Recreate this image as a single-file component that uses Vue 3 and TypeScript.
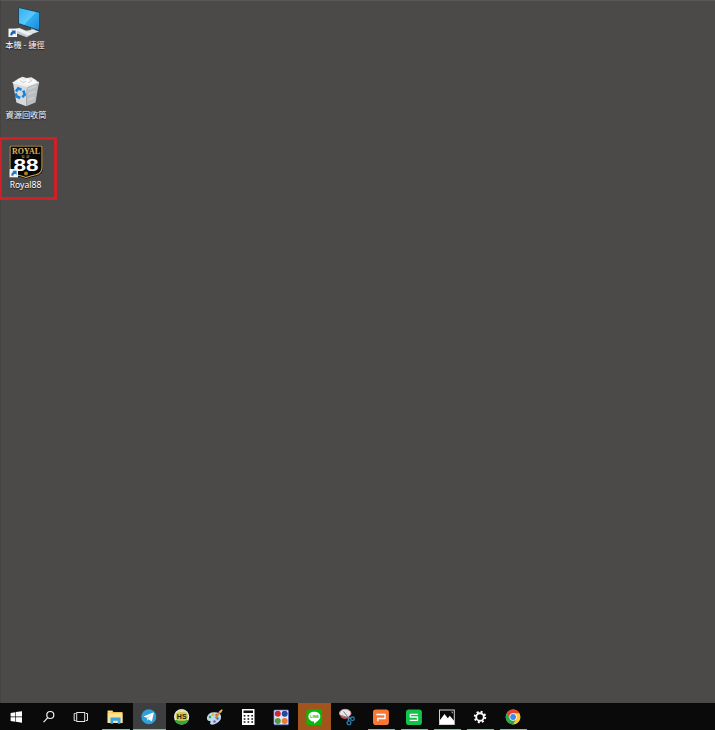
<script setup lang="ts">
type TaskName =
  | 'start' | 'search' | 'taskview' | 'explorer' | 'telegram' | 'hs' | 'paint' | 'calc'
  | 'apps' | 'line' | 'snip' | 'wpsp' | 'wpss' | 'photos' | 'settings' | 'chrome'

interface Task {
  name: TaskName
  state?: 'running' | 'active' | 'alert'
}

const tasks: Task[] = [
  { name: 'start' },
  { name: 'search' },
  { name: 'taskview' },
  { name: 'explorer', state: 'running' },
  { name: 'telegram', state: 'active' },
  { name: 'hs' },
  { name: 'paint' },
  { name: 'calc' },
  { name: 'apps' },
  { name: 'line', state: 'alert' },
  { name: 'snip' },
  { name: 'wpsp', state: 'running' },
  { name: 'wpss', state: 'running' },
  { name: 'photos', state: 'running' },
  { name: 'settings', state: 'running' },
  { name: 'chrome', state: 'running' },
]
</script>

<template>
  <div class="screen">
    <main class="desktop">
      <div class="shortcut computer">
        <svg class="icon" viewBox="0 0 36 36">
          <defs>
            <linearGradient id="pc" x1="0" y1="0" x2="1" y2="1">
              <stop offset="0" stop-color="#2fb2f2" />
              <stop offset=".5" stop-color="#5cc8fa" />
              <stop offset=".52" stop-color="#32aef0" />
              <stop offset="1" stop-color="#1889d8" />
            </linearGradient>
          </defs>
          <path d="M24 23l4 1v5l-4-.5z" fill="#9fa9b0" />
          <path d="M17.500 28l9-1.500 5.500 2-8.500 3z" fill="#dfe4e7" />
          <path d="M11.300 4.200L33 9v19.300L11.300 21z" fill="#173f60" />
          <path d="M12 5.100l20.200 4.600v17.200L12 20.200z" fill="url(#pc)" />
          <path d="M7 26.200l5-1.400 14 6-6.200 3.400L7 29.500z" fill="#c7cdd1" />
          <path d="M8 26.800l12.500 5.400 5-1.500-13-5.200z" fill="#eef1f3" />
          <rect x="1.500" y="25.600" width="8.500" height="8.400" fill="#f4f6fa" />
          <path d="M3.400 32.400q-.4-3 2-3.800l-1-1.200h4.200v4.200l-1.300-1.200q-1.800 0-2.100 2z" fill="#2360a8" />
        </svg>
        <span class="label">本機 - 捷徑</span>
      </div>

      <div class="shortcut">
        <svg class="icon" viewBox="0 0 36 36">
          <path d="M4.500 9.500l6-4 4-1.800 4 1.300 5-.8 4.500 2.800 3 3-1.500 3.500-21 1z" fill="#e9ebec" />
          <path d="M5 10l14 3.500-.8 19.700-9.800-3.700z" fill="#d6dadd" />
          <path d="M19 13.500L31 9l-3.500 20.500-9.300 3.700z" fill="#b9bec2" />
          <path d="M4.600 9.600L19 13.400 31 9" fill="none" stroke="#f5f6f7" stroke-width="1" />
          <path d="M8 8.500l5-3 2.500 2.500 4-3 2.500 3.500 4.500-2 1.500 3-9 2.500z" fill="#fafafa" />
          <path d="M12 7.500l3 2 3-1M20 10l4-2.500" fill="none" stroke="#b9bec2" stroke-width=".8" />
          <path d="M20.500 16l8-3M20 21l7-2.500M20 27l6-2.500" stroke="#d1d5d7" stroke-width="1.200" />
          <g fill="none" stroke="#1683d8" stroke-width="2.600">
            <path d="M8 18.500l2.200-3.100 3.300 1.300" />
            <path d="M15.300 17.500l1.400 4.200-2.400 2.400" />
            <path d="M12.200 25l-3.700-1.700-.8-3" />
          </g>
        </svg>
        <span class="label">資源回收筒</span>
      </div>

      <div class="shortcut highlighted">
        <svg class="icon" viewBox="0 0 36 36">
          <defs>
            <linearGradient id="gold" x1="0" y1="0" x2="0" y2="1">
              <stop offset="0" stop-color="#f2d588" />
              <stop offset="1" stop-color="#bd8b32" />
            </linearGradient>
          </defs>
          <path d="M1 2h34v23q0 6-6.500 8-6 1-10.500 2.800-4.500-1.800-10.500-2.800-6.500-2-6.500-8z" fill="#0c0b09" />
          <path d="M2 3h32v21.500q0 5.600-6.200 7.300-5.500 1-9.800 2.700-4.300-1.700-9.800-2.700-6.200-1.700-6.200-7.300z" fill="#090806" stroke="#d0aa5c" stroke-width="1.100" />
          <text x="18" y="11.300" class="brand" text-anchor="middle" textLength="28" lengthAdjust="spacingAndGlyphs">ROYAL</text>
          <path d="M13.500 12.600h3v1h-3zm5 0h3v1h-3zm-4.500 1.700h2.500v.8H14zm4.500 0H21v.8h-2.500z" fill="#a97f38" />
          <text x="18" y="27.800" class="brand-number" text-anchor="middle" textLength="25" lengthAdjust="spacingAndGlyphs">88</text>
          <circle cx="18" cy="30.600" r="2" fill="#ab7e31" />
          <rect x="1.500" y="26" width="8.500" height="8.300" fill="#f4f6fa" />
          <path d="M3.400 32.800q-.4-3 2-3.800l-1-1.200h4.200V32l-1.300-1.200q-1.800 0-2.100 2z" fill="#2374c2" />
        </svg>
        <span class="label latin">Royal88</span>
      </div>
    </main>

    <nav class="taskbar">
      <div v-for="task in tasks" :key="task.name" class="task" :class="task.state">
        <svg class="glyph" viewBox="0 0 33 27">
          <g v-if="task.name === 'start'" fill="#fff">
            <path d="M10.600 9.900l4.700-.7v4.400h-4.700zM15.900 9.100l6.100-.9v5.400h-6.100zM10.600 14.200h4.700v4.500l-4.700-.7zM15.900 14.200h6.100v5.500l-6.100-.9z" />
          </g>
          <g v-else-if="task.name === 'search'" fill="none" stroke="#f2f2f2" stroke-width="1.200">
            <circle cx="17.300" cy="12" r="3.500" />
            <path d="M14.800 14.600L10.600 19.200" />
          </g>
          <g v-else-if="task.name === 'taskview'" fill="none" stroke="#e5e5e5" stroke-width="1">
            <rect x="10.700" y="9.500" width="8" height="9" />
            <path d="M9.700 10.500H8.200v7h1.500M19.800 10.500h1.700v7h-1.700" />
          </g>
          <g v-else-if="task.name === 'explorer'">
            <path d="M8.500 7.500h5l1 1.500h9v11H8.500z" fill="#edc44f" />
            <path d="M8.800 10.300h14.700v9.700H8.800z" fill="#fbe391" />
            <path d="M9 8.800h4" stroke="#fff2b8" />
            <path d="M11.500 14.500h10v6.200h-2.600v-3h-4.700v3h-2.700z" fill="#37a5e6" />
          </g>
          <g v-else-if="task.name === 'telegram'">
            <circle cx="15.800" cy="13.800" r="7.500" fill="#2d9fd9" />
            <path d="M10.400 13.500l9.800-3.900q.7-.2.500.6L19 17.900q-.2.700-.8.300l-2.500-1.900-1.400 1.400-.5-2.900z" fill="#fff" />
            <path d="M13.800 14.800l5-3.600-3.900 4.300-.6 2.100z" fill="#afd6ea" />
          </g>
          <g v-else-if="task.name === 'hs'">
            <circle cx="15.600" cy="13.800" r="7.600" fill="#f3f5e8" />
            <path d="M9 10a7.600 7.600 0 0 1 13.200 0q-6.600-2.400-13.200 0z" fill="#d9e0c5" />
            <path d="M8.600 17a7.600 7.600 0 0 0 14 0z" fill="#36a541" />
            <rect x="9.400" y="9" width="12.600" height="8.800" rx="4" fill="#d5c94b" />
            <text x="15.700" y="16.100" class="hs" text-anchor="middle">HS</text>
          </g>
          <g v-else-if="task.name === 'paint'">
            <path d="M8 14q1.500-4.500 7-4.700 6-.3 7 3.700.6 4-3.500 6.800-4 2.400-6.500 1.800-1.800-.8-.5-2.500.5-1.300-1.500-1.200Q7.500 17.400 8 14z" fill="#bddaea" />
            <circle cx="11" cy="14" r="1.200" fill="#34a348" />
            <circle cx="14" cy="11.700" r="1.300" fill="#e3b42a" />
            <circle cx="17.500" cy="12" r="1.200" fill="#ce4c30" />
            <circle cx="18.500" cy="15.500" r="1.300" fill="#3475c4" />
            <circle cx="15.500" cy="18.500" r="1.200" fill="#8954ab" />
            <path d="M16.500 15.200l4.700-6.700" stroke="#cf8535" stroke-width="1.800" />
            <path d="M20 8.500l2.700-2.300 1 .7-1.900 3.300z" fill="#e7be72" />
          </g>
          <g v-else-if="task.name === 'calc'">
            <rect x="10" y="6" width="12.500" height="16" fill="#fff" />
            <rect x="11.500" y="7.500" width="9.500" height="2.500" fill="#111" />
            <path d="M11.700 12.800h10M11.700 15.900h10M11.700 19h10" stroke="#111" stroke-width="1.500" stroke-dasharray="1.700 2.100" />
          </g>
          <g v-else-if="task.name === 'apps'">
            <rect x="8.900" y="7" width="14.600" height="14.800" rx="1" fill="#e4eaf7" stroke="#5267c5" stroke-width=".7" />
            <circle cx="12.800" cy="10.800" r="3" fill="#d82330" />
            <circle cx="19.700" cy="10.800" r="3" fill="#24489d" />
            <circle cx="12.800" cy="18.100" r="3" fill="#4e9c3a" />
            <circle cx="19.700" cy="18.100" r="3" fill="#e9793a" />
          </g>
          <g v-else-if="task.name === 'line'">
            <rect x="8.400" y="6.500" width="15.700" height="15.500" rx="1.800" fill="#08b90b" />
            <path d="M16.300 8.700c3.500 0 6 2 6 4.700 0 2.800-2.700 4.700-6 7-.4.100-.3-.8-.2-1.800-3.300-.3-5.700-2.300-5.700-5.200 0-2.700 2.400-4.700 5.900-4.700z" fill="#fff" />
            <text x="16.400" y="14.900" class="line-word" text-anchor="middle">LINE</text>
          </g>
          <g v-else-if="task.name === 'snip'">
            <ellipse cx="14.200" cy="10.300" rx="5.700" ry="4" fill="#e7e5e8" stroke="#d79c9f" stroke-width=".9" />
            <path d="M8.500 11q1 5.200 6.500 5l2-1.500q-5 .2-8.500-3.500z" fill="#c94545" />
            <path d="M12.500 8.500l5.500 7M10.500 12.500l7 2.500" stroke="#777b82" stroke-width="1" />
            <circle cx="21.500" cy="15.800" r="1.800" fill="none" stroke="#267caf" stroke-width="1.300" />
            <circle cx="18" cy="19.800" r="1.900" fill="none" stroke="#267caf" stroke-width="1.300" />
            <path d="M17.200 14.600l2.700.9M17.200 14.800l.4 3" stroke="#3b92ba" stroke-width="1.400" />
          </g>
          <g v-else-if="task.name === 'wpsp'">
            <rect x="8" y="6.400" width="15.900" height="15.600" rx="2.800" fill="#f67834" />
            <path d="M11.300 11.500h8.700v4h-7.200v2.800" fill="none" stroke="#fff" stroke-width="1.300" />
          </g>
          <g v-else-if="task.name === 'wpss'">
            <rect x="8" y="6.400" width="15.900" height="15.600" rx="2.800" fill="#12c34b" />
            <path d="M19.800 11.300h-7.500V14h7.200v3.300h-7.700" fill="none" stroke="#fff" stroke-width="1.300" stroke-linejoin="round" />
          </g>
          <g v-else-if="task.name === 'photos'">
            <rect x="8.500" y="7" width="14.800" height="14.500" fill="#090909" stroke="#d2d2d2" stroke-width="1" />
            <path d="M9 21v-4l4.500-6 3.300 4.300 2-2.500 4.200 5V21z" fill="#fff" />
            <path d="M20 8.700h1.700v1.700z" fill="#ddd" />
          </g>
          <g v-else-if="task.name === 'settings'" fill="none" stroke="#fff">
            <circle cx="16" cy="14" r="3.800" stroke-width="1.900" />
            <circle cx="16" cy="14" r="5.200" stroke-width="2" stroke-dasharray="2 2.084" />
          </g>
          <g v-else>
            <circle cx="16.100" cy="14" r="7.400" fill="#ffca2b" />
            <path d="M9.690 10.300A7.400 7.400 0 0 1 22.500 10.300L16.100 10.300v3.700l-3.200 1.850z" fill="#e6452f" />
            <path d="M9.690 10.300A7.400 7.400 0 0 0 16.100 21.400L19.300 15.850 16.100 14l-3.200 1.850z" fill="#2ca54d" />
            <circle cx="16.100" cy="14" r="3.700" fill="#fff" />
            <circle cx="16.100" cy="14" r="2.900" fill="#4087ef" />
          </g>
        </svg>
      </div>
    </nav>
  </div>
</template>

<style>
body {
  margin: 0;
  overflow: hidden;
}
</style>

<style scoped>
.screen {
  display: flex;
  flex-direction: column;
  width: 715px;
  height: 730px;
  background: #4c4a48;
  font-family: "Liberation Sans", "Noto Sans CJK TC", sans-serif;
}

.desktop {
  flex: 1;
  display: flex;
  flex-direction: column;
  align-items: flex-start;
  box-sizing: border-box;
  border-top: 1px solid #5b5957;
  border-left: 1px solid #454341;
}

.shortcut {
  display: flex;
  flex-direction: column;
  align-items: center;
  box-sizing: border-box;
  width: 56px;
  height: 68px;
  padding: 4px 6px 0 0;
}

.shortcut.computer {
  padding: 2px 8px 0 0;
}

.shortcut.highlighted {
  width: 57px;
  height: 63px;
  margin-left: -1px;
  padding: 3px 5px 0 0;
  border: 3px solid #cf2027;
  border-left-width: 2px;
}

.icon {
  display: block;
  flex: none;
  width: 36px;
  height: 36px;
}

.label {
  height: 11px;
  color: #fff;
  font-family: "Noto Sans CJK TC", sans-serif;
  font-size: 8.2px;
  line-height: 11px;
  white-space: nowrap;
  text-shadow: 0 1px 1px #161616;
}

.label.latin {
  margin-top: 1px;
  font-family: "Noto Sans", sans-serif;
  font-size: 8.6px;
}

.brand {
  fill: url(#gold);
  font: bold 8.200px "Liberation Serif", serif;
}

.brand-number {
  fill: #fff;
  font: bold 16px "Liberation Sans", sans-serif;
}

.taskbar {
  display: flex;
  flex: none;
  height: 27px;
  background: #0a0a0a;
}

.task {
  position: relative;
  flex: none;
  width: 33.150px;
  height: 27px;
}

.glyph {
  display: block;
  width: 33px;
  height: 27px;
}

.task.active {
  background: #3d3e3f;
}

.task.alert {
  background: #a1541c;
}

.task.running::after,
.task.active::after {
  position: absolute;
  right: 3px;
  bottom: 0;
  left: 3px;
  height: 1px;
  background: #8fb5a5;
  content: "";
}

.task.active::after {
  right: 0;
  left: 0;
}

.hs {
  fill: #271c10;
  font: bold 7px "Liberation Sans", sans-serif;
}

.line-word {
  fill: #08b90b;
  font: bold 3.800px "Liberation Sans", sans-serif;
}
</style>
